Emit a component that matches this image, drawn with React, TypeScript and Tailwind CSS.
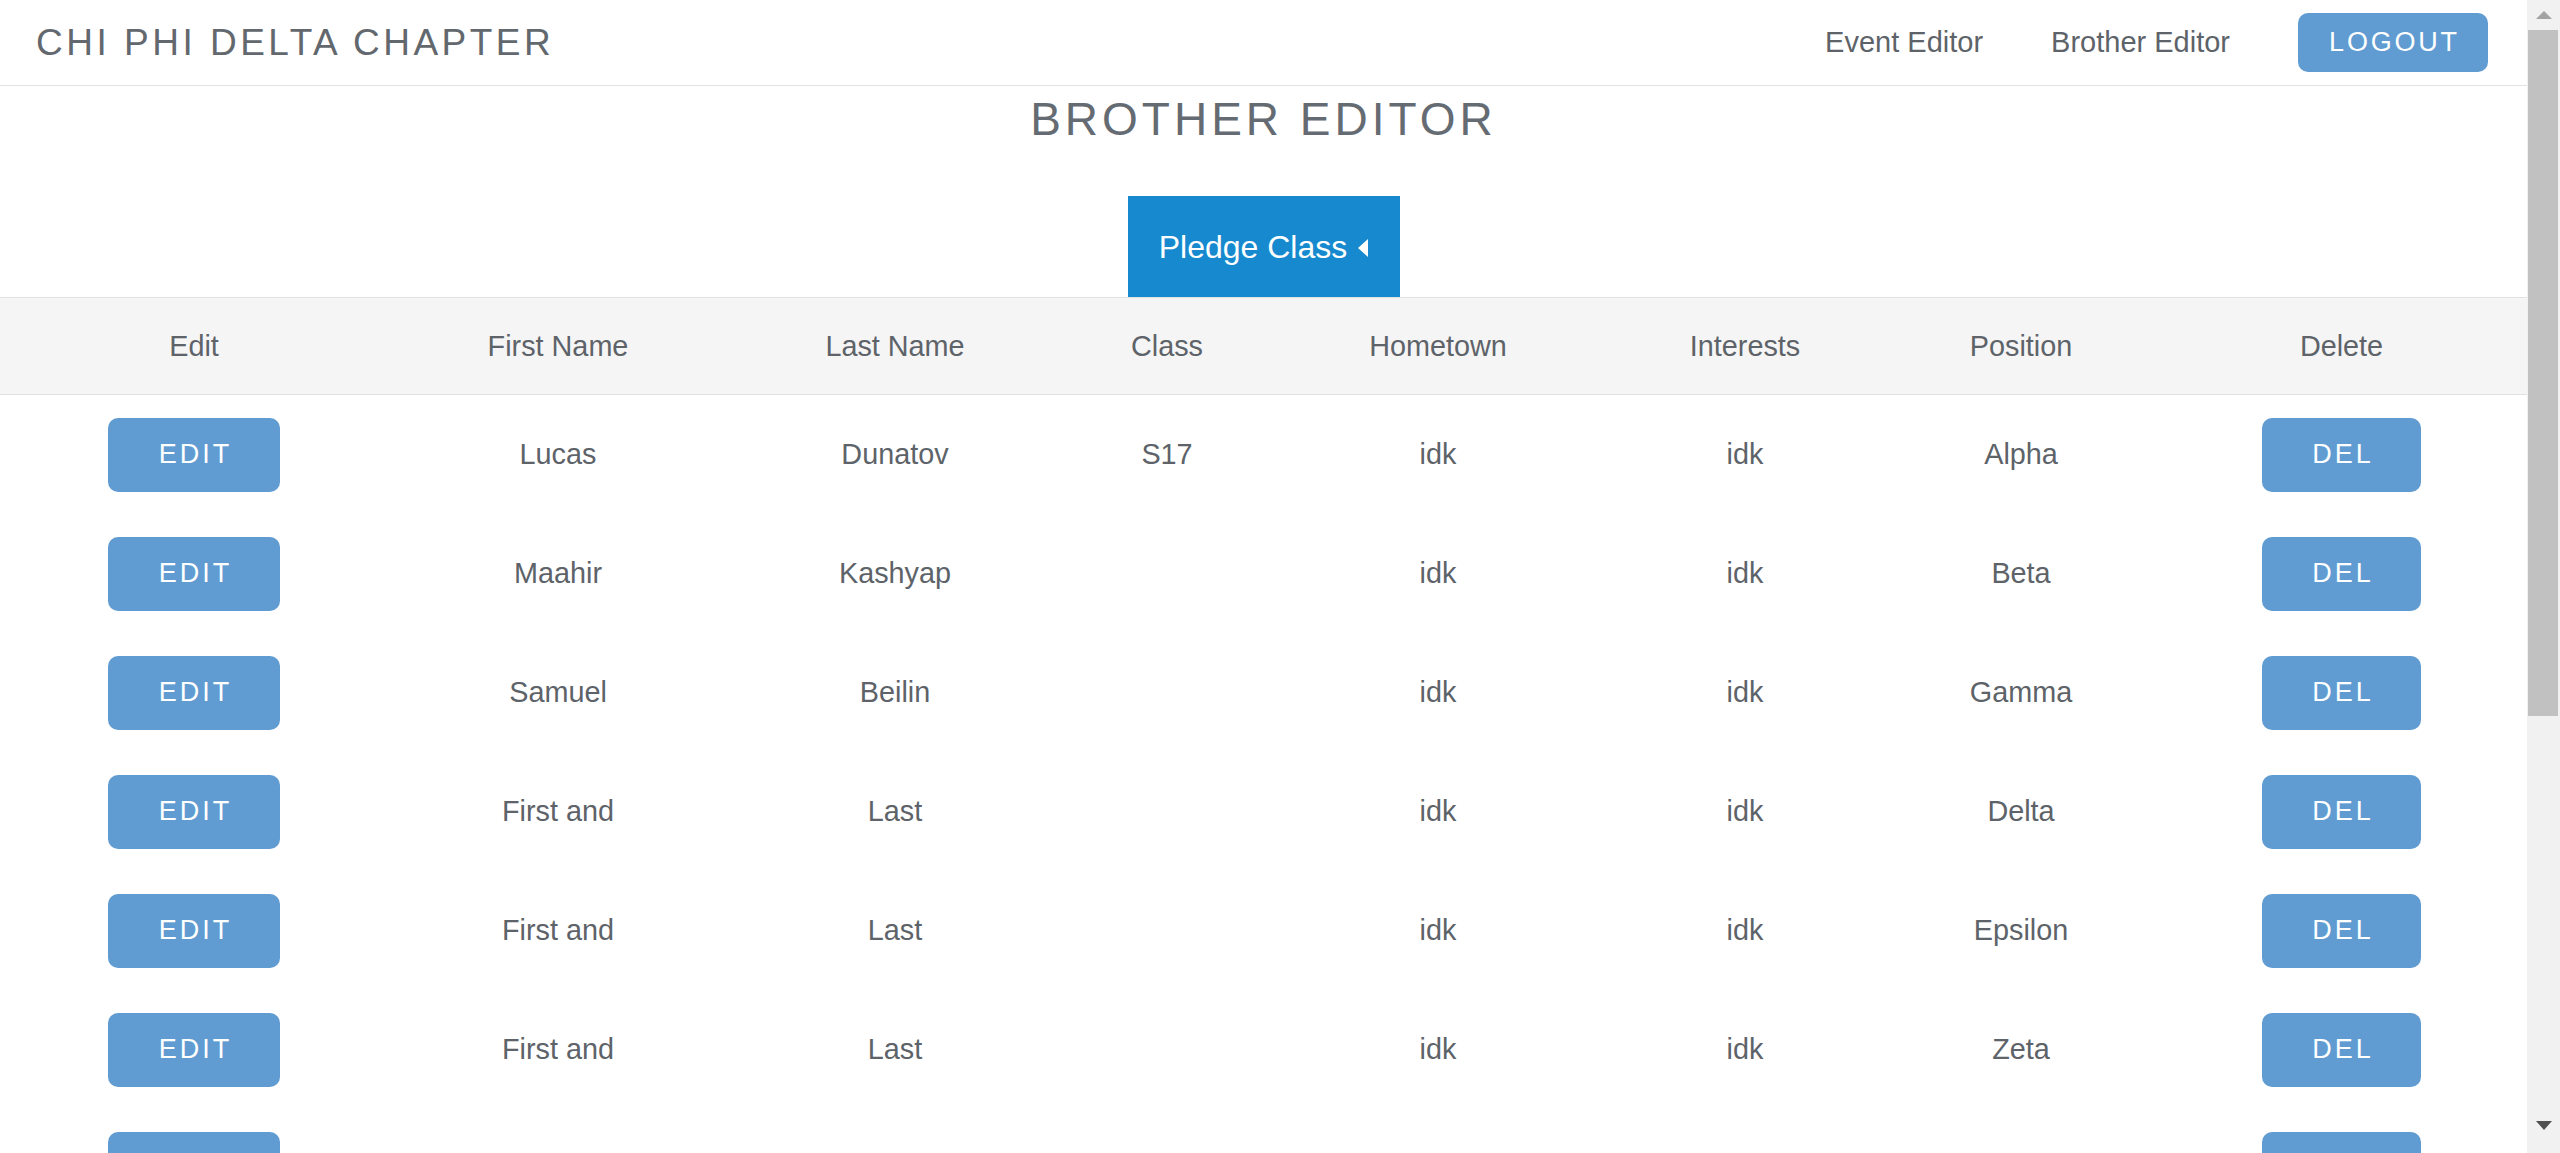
import React from "react";

const rows = [
  ["Lucas", "Dunatov", "S17", "idk", "idk", "Alpha"],
  ["Maahir", "Kashyap", "", "idk", "idk", "Beta"],
  ["Samuel", "Beilin", "", "idk", "idk", "Gamma"],
  ["First and", "Last", "", "idk", "idk", "Delta"],
  ["First and", "Last", "", "idk", "idk", "Epsilon"],
  ["First and", "Last", "", "idk", "idk", "Zeta"],
];

const headers = ["Edit", "First Name", "Last Name", "Class", "Hometown", "Interests", "Position", "Delete"];

const grid = "grid grid-cols-[388px_340px_334px_210px_332px_282px_270px_1fr]";

function ActionButton({ label, wide }: { label: string; wide?: boolean }) {
  return (
    <button
      className={
        "h-[74px] rounded-[10px] bg-[#609cd1] text-white text-[27px] tracking-[3px] leading-none flex items-center justify-center " +
        (wide ? "w-[172px]" : "w-[159px]")
      }
    >
      <span className="pl-[3px]">{label}</span>
    </button>
  );
}

export default function App() {
  return (
    <div
      className="flex h-[1153px] w-full overflow-hidden bg-white text-[#5d6369]"
      style={{ fontFamily: "'Liberation Sans', Arial, sans-serif" }}
    >
      <div className="flex-1 flex flex-col min-w-0">
        {/* Navbar */}
        <div className="h-[86px] shrink-0 border-b border-[#e3e3e3] flex items-center pl-[36px] pr-[39px]">
          <div className="text-[37px] leading-none tracking-[3.5px] text-[#62686e]">CHI PHI DELTA CHAPTER</div>
          <div className="ml-auto flex items-center gap-[68px]">
            <a className="text-[29px] leading-none text-[#5d6369]">Event Editor</a>
            <a className="text-[29px] leading-none text-[#5d6369]">Brother Editor</a>
            <button className="h-[59px] w-[190px] rounded-[10px] bg-[#609cd1] text-white text-[27px] tracking-[2.8px] leading-none flex items-center justify-center">
              <span className="pl-[3px]">LOGOUT</span>
            </button>
          </div>
        </div>

        {/* Title */}
        <div className="mt-[10px] text-center text-[46px] leading-[46px] tracking-[4px] text-[#656b72]">BROTHER EDITOR</div>

        {/* Pledge class button */}
        <div className="mt-[54px] flex justify-center">
          <button className="h-[101px] w-[272px] bg-[#1689cf] text-white flex items-center justify-center gap-[11px]">
            <span className="text-[32px] leading-none">Pledge Class</span>
            <svg width="10" height="18" viewBox="0 0 10 18" className="mt-[2px]">
              <path d="M10 0 L0 9 L10 18 Z" fill="white" />
            </svg>
          </button>
        </div>

        {/* Table header */}
        <div className={grid + " h-[98px] shrink-0 border-y border-[#e1e1e1] bg-[#f5f5f5] items-center"}>
          {headers.map((h) => (
            <div key={h} className="text-center text-[28.8px] leading-none">
              {h}
            </div>
          ))}
        </div>

        {/* Rows */}
        {rows.map((r, i) => (
          <div key={i} className={grid + " h-[119px] shrink-0 items-center"}>
            <div className="flex justify-center">
              <ActionButton label="EDIT" wide />
            </div>
            {r.map((c, j) => (
              <div key={j} className="text-center text-[28.8px] leading-none">
                {c}
              </div>
            ))}
            <div className="flex justify-center">
              <ActionButton label="DEL" />
            </div>
          </div>
        ))}

        {/* Partially visible next row */}
        <div className={grid + " h-[119px] shrink-0 items-center"}>
          <div className="flex justify-center">
            <div className="h-[74px] w-[172px] rounded-[10px] bg-[#609cd1]" />
          </div>
          <div />
          <div />
          <div />
          <div />
          <div />
          <div />
          <div className="flex justify-center">
            <div className="h-[74px] w-[159px] rounded-[10px] bg-[#609cd1]" />
          </div>
        </div>
      </div>

      {/* Scrollbar */}
      <div className="w-[33px] shrink-0 h-full bg-[#f1f1f1] flex flex-col items-stretch">
        <div className="h-[30px] flex items-center justify-center">
          <svg width="16" height="8" viewBox="0 0 16 8">
            <path d="M0 8 L8 0 L16 8 Z" fill="#a3a3a3" />
          </svg>
        </div>
        <div className="mx-[2px] ml-[1px] h-[686px] bg-[#c1c1c1]" />
        <div className="flex-1" />
        <div className="h-[36px] flex items-start justify-center pt-[4px]">
          <svg width="16" height="9" viewBox="0 0 16 9">
            <path d="M0 0 L16 0 L8 9 Z" fill="#505050" />
          </svg>
        </div>
      </div>
    </div>
  );
}
